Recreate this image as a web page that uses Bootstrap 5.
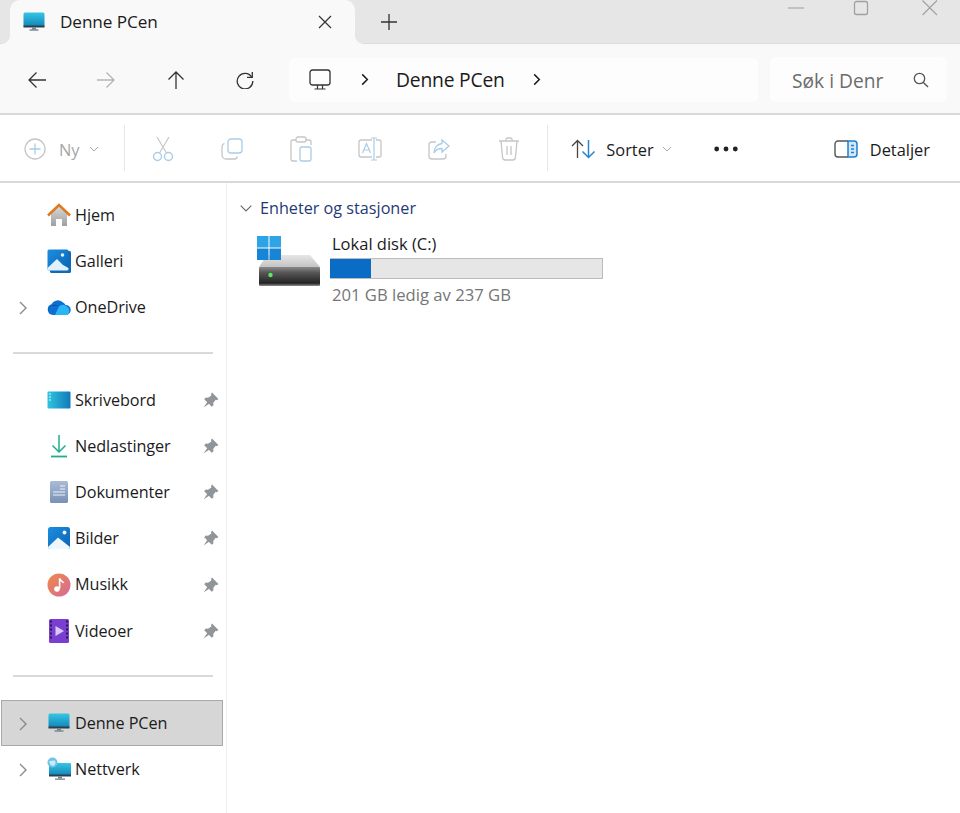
<!DOCTYPE html>
<html lang="nb">
<head>
<meta charset="utf-8">
<title>Denne PCen</title>
<link href="https://cdn.jsdelivr.net/npm/bootstrap@5.3.0/dist/css/bootstrap.min.css" rel="stylesheet">
<style>
html,body{height:813px;overflow:hidden;background:#fff;}
body{font-family:"Open Sans","Noto Sans","Liberation Sans",sans-serif;color:#1b1b1b;}
svg{display:block;flex:none;}
.win-top{height:44px;background:#e6e6e6;border-bottom:1px solid #dcdcdc;}
.win-tab{width:345px;height:44px;margin-left:10px;background:#f9f9f9;border-radius:10px 10px 0 0;padding:0 23px 0 13px;font-size:17.2px;letter-spacing:-.1px;font-weight:500;position:relative;}
.win-tab::before,.win-tab::after{content:"";position:absolute;bottom:0;width:8px;height:8px;}
.win-tab::before{left:-8px;background:radial-gradient(circle at 0 0,#e6e6e6 7.5px,#f9f9f9 8px);}
.win-tab::after{right:-8px;background:radial-gradient(circle at 100% 0,#e6e6e6 7.5px,#f9f9f9 8px);}
.tab-name{margin-left:15px;}
.tab-plus{margin-left:26px;}
.win-ctrls{margin-left:auto;align-self:flex-start;}
.nav-row{height:71px;background:#f9f9f9;border-bottom:2px solid #d9d9d9;padding:2px 0 0 2px;}
.nav-btn{width:69.5px;}
.addr{width:469px;height:44px;margin-left:9px;background:#fdfdfd;border-radius:6px;padding-left:20px;font-size:19.3px;letter-spacing:-.2px;}
.addr-sep{margin-left:30px;}
.addr-name{margin:0 28px 0 27px;padding-top:2px;}
.srch{width:177px;height:45px;margin-left:12px;background:#fdfdfd;border-radius:6px;padding:0 18px 0 22px;font-size:19.2px;color:#6c6c6c;}
.srch-txt{padding-top:3px;}
.cmd-row{height:68px;background:#fff;border-bottom:2px solid #d9d9d9;font-size:16.4px;padding-top:2px;}
.cmd-txt{padding-top:2px;}
.cmd-new{width:124px;padding-left:24px;color:#a6a6a6;}
.cmd-new .cmd-txt{margin-left:13px;}
.cmd-new-chev{margin-left:9px;}
.cmd-sep{width:1px;height:46px;background:#e8e8e8;margin-top:-2px;}
.cmd-ico{width:69.2px;}
.cmd-first{margin-left:3px;}
.cmd-last{margin-right:4.2px;}
.cmd-sort{padding-left:23px;}
.cmd-sort .cmd-txt{margin-left:11px;}
.cmd-dots{margin-left:42px;}
.cmd-det{margin-left:auto;margin-right:30px;}
.layout{height:630px;}
.side{width:227px;border-right:1px solid #efefef;padding-top:9px;font-size:16.2px;}
.side-item{height:46.2px;position:relative;padding-left:47px;padding-right:7px;}
.side-label{margin-left:4px;letter-spacing:-.05px;}
.side-chev{position:absolute;left:19px;top:17px;}
.side-pin{margin-left:auto;}
.side-line{height:2px;background:#d9d9d9;width:200px;margin:-2px 0 0 13px;}
.side-cur{background:#d6d6d6;border:1px solid #a9a9a9;margin:0 3px 0 1px;padding-left:45px;}
.side-cur .side-chev{left:17px;top:16px;}
.pane{padding:14px 0 0 13px;min-width:0;}
.grp-head{color:#1f3a77;font-size:16.2px;height:22px;}
.drive{margin:17px 0 0 17px;}
.drive-body{margin-left:10px;width:273px;margin-top:-3px;}
.drive-name{font-size:16.5px;padding-left:2px;line-height:22px;}
.drive-bar{height:21px;border-radius:0;background:#e6e6e6;border:1px solid #bcbcbc;border-left:0;margin-top:3px;}
.drive-bar .progress-bar{background:#0a6cc4;}
.drive-free{font-size:16.65px;color:#767676;padding-left:2px;line-height:22px;margin-top:5px;}
</style>
</head>
<body>
<svg width="0" height="0" class="position-absolute">
<defs>
<linearGradient id="gm" x1="0" y1="0" x2="0" y2="1"><stop offset="0" stop-color="#36c6e4"/><stop offset="1" stop-color="#0f83b8"/></linearGradient>
<linearGradient id="gb" x1="0" y1="0" x2="1" y2="1"><stop offset="0" stop-color="#1b8fe0"/><stop offset="1" stop-color="#0b63b4"/></linearGradient>
<linearGradient id="gd" x1="0" y1="0" x2="1" y2="0"><stop offset="0" stop-color="#2fc6e0"/><stop offset="1" stop-color="#1278b8"/></linearGradient>
<linearGradient id="gh" x1="0" y1="0" x2="0" y2="1"><stop offset="0" stop-color="#d8d8d8"/><stop offset="1" stop-color="#9f9f9f"/></linearGradient>
<linearGradient id="gdoc" x1="0" y1="0" x2="0" y2="1"><stop offset="0" stop-color="#a9bbd6"/><stop offset="1" stop-color="#7891b6"/></linearGradient>
<linearGradient id="gmu" x1="0" y1="0" x2="1" y2="1"><stop offset="0" stop-color="#ee8a45"/><stop offset="1" stop-color="#d56a9a"/></linearGradient>
<linearGradient id="gdr" x1="0" y1="0" x2="0" y2="1"><stop offset="0" stop-color="#8a8a8a"/><stop offset=".3" stop-color="#565656"/><stop offset=".85" stop-color="#232323"/><stop offset="1" stop-color="#8f8f8f"/></linearGradient>
<linearGradient id="gdt" x1="0" y1="0" x2="0" y2="1"><stop offset="0" stop-color="#e6e6e6"/><stop offset="1" stop-color="#c4c4c4"/></linearGradient>
<symbol id="monitor" viewBox="0 0 22 20"><rect x="0.5" y="0.5" width="21" height="14.5" rx="1.5" fill="url(#gm)"/><rect x="0.5" y="13.5" width="21" height="2" fill="#2d3f4b"/><rect x="9" y="15.5" width="4" height="2" fill="#72848f"/><rect x="6.5" y="17.3" width="9" height="1.4" fill="#72848f"/></symbol>
<symbol id="pin" viewBox="0 0 16 16"><path d="M9 .6 15.4 7 13.9 8.2 12.7 7.8 10.2 11 10.5 13.3 8.8 14.8 1.2 7.2 2.8 5.5 5 5.8 8.4 3.4 8 1.9Z" fill="#90959a"/><path d="M4.6 9.6 .6 15.4 6.4 11.4Z" fill="#90959a"/></symbol>
<symbol id="chev" viewBox="0 0 8 14"><path d="M1 1 7 7 1 13" fill="none" stroke="#8a8a8a" stroke-width="1.4"/></symbol>
<symbol id="chevd" viewBox="0 0 10 6"><path d="M1 1 5 5 9 1" fill="none" stroke="#a8a8a8" stroke-width="1"/></symbol>
<symbol id="chevb" viewBox="0 0 8 14"><path d="M1 1.5 6.5 7 1 12.5" fill="none" stroke="#1b1b1b" stroke-width="1.6"/></symbol>
</defs>
</svg>

<header class="win-top d-flex align-items-start">
  <div class="win-tab d-flex align-items-center">
    <svg width="22" height="20"><use href="#monitor"/></svg>
    <span class="tab-name flex-grow-1">Denne PCen</span>
    <svg width="14" height="14" viewBox="0 0 14 14"><path d="M1 1 13 13M13 1 1 13" stroke="#333" stroke-width="1.2"/></svg>
  </div>
  <svg class="tab-plus align-self-center" width="16" height="16" viewBox="0 0 16 16"><path d="M8 0V16M0 8H16" stroke="#333" stroke-width="1.3"/></svg>
  <svg class="win-ctrls" width="172" height="18" viewBox="0 0 172 18"><path d="M0 8H16" stroke="#a8a8a8" stroke-width="1.2"/><rect x="66.5" y="1.5" width="13" height="13" rx="2" fill="none" stroke="#a0a0a0" stroke-width="1.3"/><path d="M134.5 .5 149 15M149 .5 134.5 15" stroke="#a0a0a0" stroke-width="1.1"/></svg>
</header>

<div class="nav-row d-flex align-items-center">
  <div class="nav-btn d-flex justify-content-center"><svg width="20" height="18" viewBox="0 0 20 18"><path d="M19 9H2M9.5 1.5 2 9l7.5 7.5" fill="none" stroke="#333" stroke-width="1.3"/></svg></div>
  <div class="nav-btn d-flex justify-content-center"><svg width="20" height="18" viewBox="0 0 20 18"><path d="M1 9H18M10.5 1.5 18 9l-7.5 7.5" fill="none" stroke="#b5b5b5" stroke-width="1.3"/></svg></div>
  <div class="nav-btn d-flex justify-content-center"><svg width="18" height="20" viewBox="0 0 18 20"><path d="M9 19V2M1.5 9.5 9 2l7.5 7.5" fill="none" stroke="#333" stroke-width="1.3"/></svg></div>
  <div class="nav-btn d-flex justify-content-center"><svg width="18" height="18" viewBox="0 0 18 18"><path d="M15.6 6A7.8 7.8 0 1 0 16.8 10" fill="none" stroke="#333" stroke-width="1.3"/><path d="M16.3 1V6.3H11" fill="none" stroke="#333" stroke-width="1.3"/></svg></div>
  <div class="addr d-flex align-items-center">
    <svg width="22" height="22" viewBox="0 0 22 22"><rect x="1" y="1" width="20" height="15" rx="2.5" fill="none" stroke="#333" stroke-width="1.3"/><path d="M8.5 16V20M13.5 16V20M5.5 20H16.5" fill="none" stroke="#333" stroke-width="1.2"/></svg>
    <svg class="addr-sep" width="8" height="13"><use href="#chevb"/></svg>
    <span class="addr-name">Denne PCen</span>
    <svg width="8" height="13"><use href="#chevb"/></svg>
  </div>
  <div class="srch d-flex align-items-center justify-content-between">
    <span class="srch-txt">Søk i Denr</span>
    <svg width="16" height="16" viewBox="0 0 16 16"><circle cx="6.5" cy="6.5" r="5.2" fill="none" stroke="#555" stroke-width="1.3"/><path d="M10.4 10.4 15 15" stroke="#555" stroke-width="1.4"/></svg>
  </div>
</div>

<div class="cmd-row d-flex align-items-center">
  <div class="cmd-new d-flex align-items-center">
    <svg width="22" height="22" viewBox="0 0 22 22"><circle cx="11" cy="11" r="10" fill="none" stroke="#c6c6c6" stroke-width="1.3"/><path d="M11 5.5V16.5M5.5 11H16.5" stroke="#a9cde9" stroke-width="1.3"/></svg>
    <span class="cmd-txt">Ny</span>
    <svg class="cmd-new-chev" width="10" height="6"><use href="#chevd"/></svg>
  </div>
  <div class="cmd-sep"></div>
  <div class="cmd-ico cmd-first d-flex justify-content-center"><svg width="22" height="26" viewBox="0 0 22 26"><path d="M5 1 14.5 17M17 1 7.5 17" fill="none" stroke="#c6c6c6" stroke-width="1.2"/><circle cx="5.5" cy="20.5" r="4" fill="none" stroke="#a9cde9" stroke-width="1.4"/><circle cx="16.5" cy="20.5" r="4" fill="none" stroke="#a9cde9" stroke-width="1.4"/></svg></div>
  <div class="cmd-ico d-flex justify-content-center"><svg width="22" height="22" viewBox="0 0 22 22"><path d="M3.5 5.5C2 6 1 7 1 8.5V17a4 4 0 0 0 4 4h8.5c1.5 0 2.5-1 3-2.5" fill="none" stroke="#c6c6c6" stroke-width="1.3"/><rect x="7" y="1" width="14" height="14" rx="3" fill="none" stroke="#a9cde9" stroke-width="1.3"/></svg></div>
  <div class="cmd-ico d-flex justify-content-center"><svg width="22" height="26" viewBox="0 0 22 26"><path d="M6 4H3a2 2 0 0 0-2 2v17a2 2 0 0 0 2 2h4M16 4h3a2 2 0 0 1 2 2v3" fill="none" stroke="#c6c6c6" stroke-width="1.3"/><rect x="6" y="1" width="10" height="5" rx="2" fill="none" stroke="#c6c6c6" stroke-width="1.3"/><rect x="10" y="11" width="11" height="14" rx="2" fill="none" stroke="#a9cde9" stroke-width="1.3"/></svg></div>
  <div class="cmd-ico d-flex justify-content-center"><svg width="24" height="24" viewBox="0 0 24 24"><path d="M14 3H3a2 2 0 0 0-2 2v13a2 2 0 0 0 2 2h11M18 3h3a2 2 0 0 1 2 2v13a2 2 0 0 1-2 2h-3" fill="none" stroke="#c6c6c6" stroke-width="1.3"/><path d="M16 1V23M13 1H19M13 23H19" fill="none" stroke="#a9cde9" stroke-width="1.2"/><path d="M4.5 16 8.5 6.5 12.5 16M6 13H11" fill="none" stroke="#a9cde9" stroke-width="1.2"/></svg></div>
  <div class="cmd-ico d-flex justify-content-center"><svg width="22" height="22" viewBox="0 0 22 22"><path d="M8 4H4a3 3 0 0 0-3 3v11a3 3 0 0 0 3 3h11a3 3 0 0 0 3-3v-2" fill="none" stroke="#c6c6c6" stroke-width="1.3"/><path d="M14 2 21 8 14 14V10.5C10 10.5 7.5 12 6 15 6 10 9 6 14 5.5Z" fill="none" stroke="#a9cde9" stroke-width="1.3"/></svg></div>
  <div class="cmd-ico cmd-last d-flex justify-content-center"><svg width="22" height="24" viewBox="0 0 22 24"><path d="M1 4H21M8 4V2.5A1.5 1.5 0 0 1 9.5 1h3A1.5 1.5 0 0 1 14 2.5V4M3 4 4.5 20a3 3 0 0 0 3 3h7a3 3 0 0 0 3-3L19 4M9 9V18M13 9V18" fill="none" stroke="#c6c6c6" stroke-width="1.3"/></svg></div>
  <div class="cmd-sep"></div>
  <div class="cmd-sort d-flex align-items-center">
    <svg width="24" height="20" viewBox="0 0 24 20"><path d="M6.5 19V1.5M1 7 6.5 1.5 12 7" fill="none" stroke="#444" stroke-width="1.3"/><path d="M17.5 1V18.5M11.5 12.5l6 6 6-6" fill="none" stroke="#2a83cf" stroke-width="1.5"/></svg>
    <span class="cmd-txt">Sorter</span>
    <svg class="ms-2" width="10" height="6"><use href="#chevd"/></svg>
  </div>
  <div class="cmd-dots"><svg width="24" height="6" viewBox="0 0 24 6"><circle cx="2.7" cy="3" r="2.4" fill="#222"/><circle cx="12" cy="3" r="2.4" fill="#222"/><circle cx="21.3" cy="3" r="2.4" fill="#222"/></svg></div>
  <div class="cmd-det d-flex align-items-center">
    <svg width="24" height="18" viewBox="0 0 24 18"><path d="M14 1H4a3 3 0 0 0-3 3v10a3 3 0 0 0 3 3h10" fill="none" stroke="#555" stroke-width="1.4"/><path d="M14 1h6a3 3 0 0 1 3 3v10a3 3 0 0 1-3 3h-6Z" fill="#d3e8f8" stroke="#1f7fcf" stroke-width="1.5"/><path d="M17 5.5h3M17 9h3M17 12.5h3" stroke="#1f7fcf" stroke-width="1.3"/></svg>
    <span class="cmd-txt ms-2 ps-1">Detaljer</span>
  </div>
</div>

<div class="layout d-flex">
  <nav class="side flex-shrink-0">
    <div class="side-item d-flex align-items-center">
      <svg width="24" height="24" viewBox="0 0 24 24"><path d="M4 11 12 3.5 20 11V23H15V16H9V23H4Z" fill="url(#gh)"/><path d="M1 12.5 12 2 23 12.5" fill="none" stroke="#dc7a24" stroke-width="2.6"/></svg>
      <span class="side-label">Hjem</span>
    </div>
    <div class="side-item d-flex align-items-center">
      <svg width="24" height="24" viewBox="0 0 24 24"><rect x="3" y="2" width="21" height="22" rx="1.5" fill="#1269b5"/><rect x="0.5" y="0.5" width="21" height="21" rx="1.5" fill="url(#gb)"/><path d="M0.5 19 10 10l6 6 5.5 3v1a1.5 1.5 0 0 1-1.5 1.5H2A1.5 1.5 0 0 1 .5 20Z" fill="#dff1fc"/><circle cx="15.5" cy="6" r="1.8" fill="#dff1fc"/></svg>
      <span class="side-label">Galleri</span>
    </div>
    <div class="side-item d-flex align-items-center">
      <svg class="side-chev" width="8" height="14"><use href="#chev"/></svg>
      <svg width="24" height="16" viewBox="0 0 24 16"><path d="M6 16A5.5 5.5 0 0 1 4.5 5.3 7 7 0 0 1 16 3.6 5.5 5.5 0 0 1 18.5 6 5 5 0 0 1 19 16Z" fill="#0d6fd1"/><path d="M8 16 12 7.5 A5.5 5.5 0 0 1 19 7 5 5 0 0 1 20 16Z" fill="#29b6f2"/><path d="M3 7 12 7A7 7 0 0 0 1 13Z" fill="#0a4fa8"/></svg>
      <span class="side-label">OneDrive</span>
    </div>
    <div class="side-item d-flex align-items-center p-0"><div class="side-line"></div></div>
    <div class="side-item d-flex align-items-center">
      <svg width="24" height="18" viewBox="0 0 24 18"><rect x=".5" y=".5" width="23" height="17" rx="1" fill="url(#gd)"/><path d="M2 3H4M2 6H4M2 9H4" stroke="#d8f3fb" stroke-width="1"/></svg>
      <span class="side-label">Skrivebord</span>
      <svg class="side-pin" width="16" height="16"><use href="#pin"/></svg>
    </div>
    <div class="side-item d-flex align-items-center">
      <svg width="24" height="24" viewBox="0 0 24 24"><path d="M12 1V17.5M5.5 11.5 12 18l6.5-6.5" fill="none" stroke="#1fae8c" stroke-width="1.5"/><path d="M4 22.5H20" stroke="#1fae8c" stroke-width="1.8"/></svg>
      <span class="side-label">Nedlastinger</span>
      <svg class="side-pin" width="16" height="16"><use href="#pin"/></svg>
    </div>
    <div class="side-item d-flex align-items-center">
      <svg width="24" height="24" viewBox="0 0 24 24"><rect x="3" y="1" width="18" height="22" rx="1.5" fill="url(#gdoc)"/><path d="M13 6H18M13 9H18M6 12H18M6 15H18" stroke="#eef3f9" stroke-width="1.2"/></svg>
      <span class="side-label">Dokumenter</span>
      <svg class="side-pin" width="16" height="16"><use href="#pin"/></svg>
    </div>
    <div class="side-item d-flex align-items-center">
      <svg width="24" height="24" viewBox="0 0 24 24"><rect x="1" y="1" width="22" height="22" rx="2.5" fill="url(#gb)"/><path d="M1 21 11 11.5 23 21V21a2 2 0 0 1-2 2H3a2 2 0 0 1-2-2Z" fill="#eef7fd"/><circle cx="17.5" cy="6.5" r="1.9" fill="#eef7fd"/></svg>
      <span class="side-label">Bilder</span>
      <svg class="side-pin" width="16" height="16"><use href="#pin"/></svg>
    </div>
    <div class="side-item d-flex align-items-center">
      <svg width="24" height="24" viewBox="0 0 24 24"><circle cx="12" cy="12" r="11.5" fill="url(#gmu)"/><path d="M12.6 5.5V15.5" stroke="#fff" stroke-width="1.6"/><path d="M12.6 5.5C13 8 16 8 16.5 10" fill="none" stroke="#fff" stroke-width="1.6"/><circle cx="10" cy="16" r="2.8" fill="#fff"/></svg>
      <span class="side-label">Musikk</span>
      <svg class="side-pin" width="16" height="16"><use href="#pin"/></svg>
    </div>
    <div class="side-item d-flex align-items-center">
      <svg width="24" height="24" viewBox="0 0 24 24"><rect x="2" y="0" width="20" height="24" rx="1.5" fill="#7a3fd0"/><path d="M3 2.5H5M3 6.5H5M3 10.5H5M3 14.5H5M3 18.5H5M19 2.5H21M19 6.5H21M19 10.5H21M19 14.5H21M19 18.5H21" stroke="#2b1a55" stroke-width="1.8"/><path d="M8.5 7 17 12 8.5 17Z" fill="#d9c9f7"/></svg>
      <span class="side-label">Videoer</span>
      <svg class="side-pin" width="16" height="16"><use href="#pin"/></svg>
    </div>
    <div class="side-item d-flex align-items-center p-0"><div class="side-line"></div></div>
    <div class="side-item side-cur d-flex align-items-center">
      <svg class="side-chev" width="8" height="14"><use href="#chev"/></svg>
      <svg width="24" height="20"><use href="#monitor"/></svg>
      <span class="side-label">Denne PCen</span>
    </div>
    <div class="side-item d-flex align-items-center">
      <svg class="side-chev" width="8" height="14"><use href="#chev"/></svg>
      <svg width="24" height="24" viewBox="0 0 24 24"><rect x="2" y="6" width="22" height="13" rx="1" fill="url(#gm)"/><rect x="2" y="17.5" width="22" height="2" fill="#2d3f4b"/><rect x="11" y="19.5" width="4" height="2" fill="#72848f"/><rect x="8" y="21.5" width="10" height="1.3" fill="#72848f"/><circle cx="5.5" cy="5.5" r="5" fill="#6ec3e8"/><path d="M2 3.5C4 5 5 3 7 3.5S9 6 7.5 8 4 8 3 7" fill="#c9ecf9"/></svg>
      <span class="side-label">Nettverk</span>
    </div>
  </nav>

  <main class="pane flex-grow-1">
    <div class="grp-head d-flex align-items-center">
      <svg width="12" height="7" viewBox="0 0 12 7"><path d="M.7.7 6 6 11.3.7" fill="none" stroke="#666" stroke-width="1.1"/></svg>
      <span class="ms-2">Enheter og stasjoner</span>
    </div>
    <div class="drive d-flex align-items-start">
      <svg width="63" height="52" viewBox="0 0 63 52"><path d="M2 31 10 19H53L63 31Z" fill="url(#gdt)"/><rect x="2" y="31" width="61" height="19" rx="1" fill="url(#gdr)"/><circle cx="13.5" cy="39" r="2.2" fill="#5ce85c"/><rect x="0" y="0" width="11.5" height="11.5" fill="#2ea3e6"/><rect x="12.5" y="0" width="11.5" height="11.5" fill="#2ea3e6"/><rect x="0" y="12.5" width="11.5" height="11.5" fill="#1784d6"/><rect x="12.5" y="12.5" width="11.5" height="11.5" fill="#1784d6"/></svg>
      <div class="drive-body">
        <div class="drive-name">Lokal disk (C:)</div>
        <div class="progress drive-bar" role="progressbar" aria-valuenow="15" aria-valuemin="0" aria-valuemax="100">
          <div class="progress-bar" style="width:15.2%"></div>
        </div>
        <div class="drive-free">201 GB ledig av 237 GB</div>
      </div>
    </div>
  </main>
</div>
<script src="https://cdn.jsdelivr.net/npm/bootstrap@5.3.0/dist/js/bootstrap.bundle.min.js"></script>
</body>
</html>
